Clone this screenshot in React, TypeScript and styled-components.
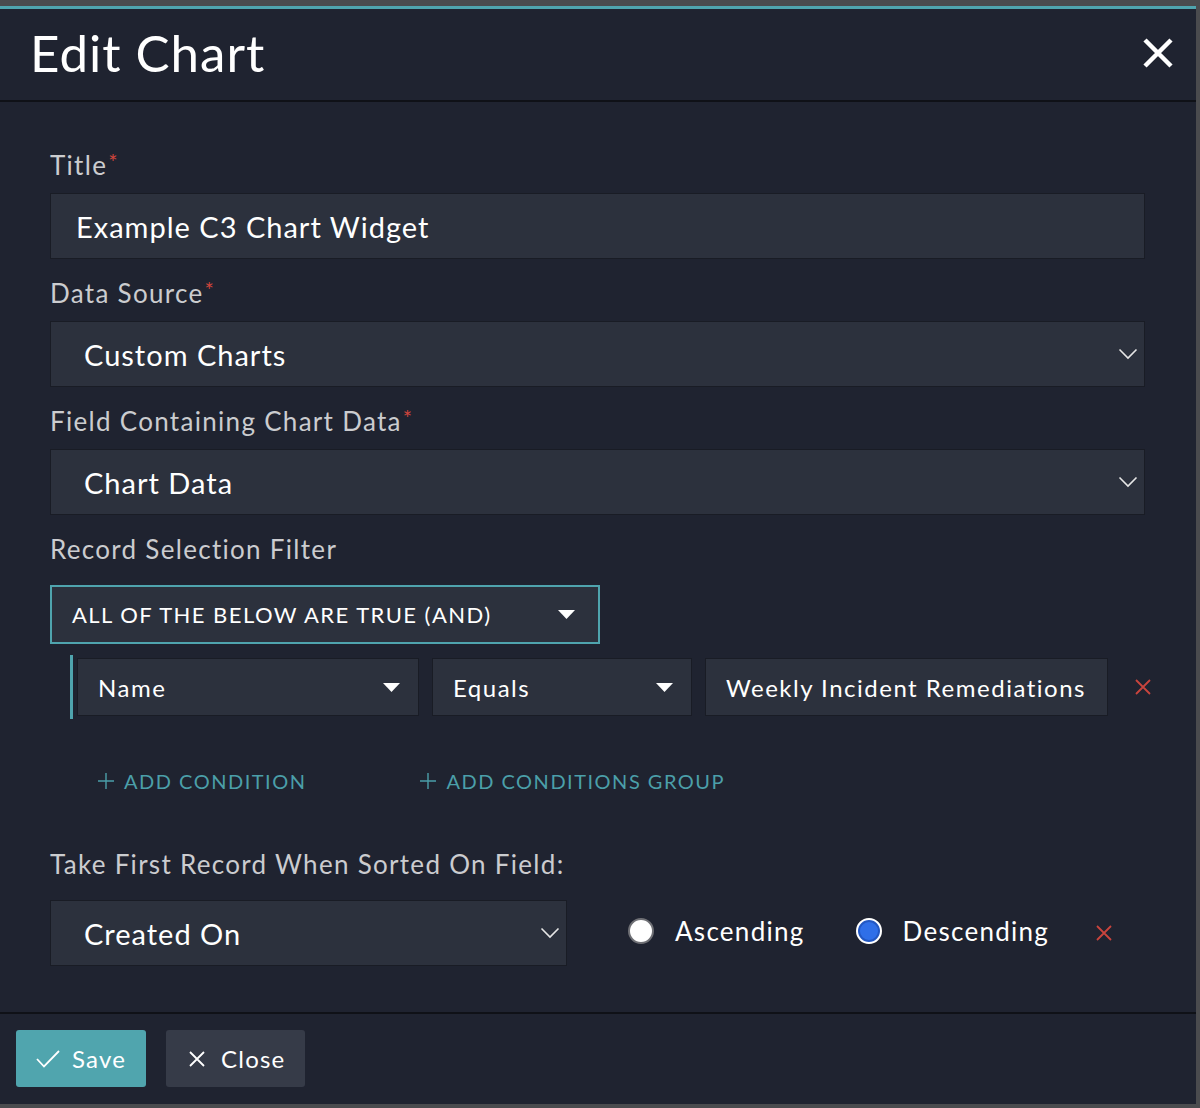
import React from 'react';
import styled, { createGlobalStyle } from 'styled-components';

const GlobalStyle = createGlobalStyle`
  * { box-sizing: border-box; }
  html, body { margin: 0; padding: 0; }
  body {
    background: #4a4b4e;
    font-family: Lato, "Open Sans", sans-serif;
    color: #fff;
  }
`;

const Chevron = () => (
  <svg width="20" height="12" viewBox="0 0 20 12" fill="none">
    <path d="M1.5 1.5 L10 10 L18.5 1.5" stroke="#e6e6e6" strokeWidth="1.6" />
  </svg>
);

const Caret = () => (
  <svg width="17" height="9" viewBox="0 0 17 9">
    <path d="M0 0 H17 L8.5 9 Z" fill="#fff" />
  </svg>
);

const RemoveX = () => (
  <svg width="16" height="16" viewBox="0 0 16 16">
    <path d="M1 1 L15 15 M15 1 L1 15" stroke="#c9443d" strokeWidth="1.8" />
  </svg>
);

const Plus = () => (
  <svg width="18" height="18" viewBox="0 0 18 18">
    <path d="M9 1 V17 M1 9 H17" stroke="#4b9fa9" strokeWidth="1.4" />
  </svg>
);

const App: React.FC = () => {
  return (
    <>
      <GlobalStyle />
      <Modal>
        <Header>
          <HeaderTitle>Edit Chart</HeaderTitle>
          <CloseIcon aria-label="close">
            <svg width="32" height="32" viewBox="0 0 32 32">
              <path d="M3 3 L29 29 M29 3 L3 29" stroke="#fff" strokeWidth="4.5" />
            </svg>
          </CloseIcon>
        </Header>
        <Body>
          <Label>
            Title<Req>*</Req>
          </Label>
          <Field>Example C3 Chart Widget</Field>

          <Label>
            Data Source<Req>*</Req>
          </Label>
          <Field $select>
            Custom Charts
            <Chevron />
          </Field>

          <Label>
            Field Containing Chart Data<Req>*</Req>
          </Label>
          <Field $select>
            Chart Data
            <Chevron />
          </Field>

          <Label>Record Selection Filter</Label>
          <LogicSelect>
            ALL OF THE BELOW ARE TRUE (AND)
            <Caret />
          </LogicSelect>

          <ConditionRow>
            <CondBox $width={342} $caret>
              Name
              <Caret />
            </CondBox>
            <CondBox $width={260} $caret>
              Equals
              <Caret />
            </CondBox>
            <CondBox $width={403}>Weekly Incident Remediations</CondBox>
            <RemoveSlot>
              <RemoveX />
            </RemoveSlot>
          </ConditionRow>

          <AddRow>
            <AddLink>
              <Plus />
              ADD CONDITION
            </AddLink>
            <AddLink>
              <Plus />
              ADD CONDITIONS GROUP
            </AddLink>
          </AddRow>

          <Label>Take First Record When Sorted On Field:</Label>
          <SortRow>
            <Field $select $width={517}>
              Created On
              <Chevron />
            </Field>
            <RadioOption>
              <Radio />
              Ascending
            </RadioOption>
            <RadioOption>
              <Radio $checked />
              Descending
            </RadioOption>
            <RemoveX />
          </SortRow>
        </Body>
        <Footer>
          <Button $primary>
            <svg width="24" height="20" viewBox="0 0 24 20" fill="none">
              <path d="M1 10 L8 17.5 L23 2" stroke="#fff" strokeWidth="1.8" />
            </svg>
            Save
          </Button>
          <Button>
            <svg width="16" height="16" viewBox="0 0 16 16" fill="none">
              <path d="M1 1 L15 15 M15 1 L1 15" stroke="#fff" strokeWidth="1.8" />
            </svg>
            Close
          </Button>
        </Footer>
      </Modal>
    </>
  );
};

const Modal = styled.div`
  width: 1196px;
  height: 1098px;
  margin-top: 6px;
  background: #1f2330;
  border-top: 3px solid #4fa4ae;
  display: flex;
  flex-direction: column;
`;

const Header = styled.div`
  height: 93px;
  border-bottom: 2px solid #0f1117;
  display: flex;
  align-items: center;
  justify-content: space-between;
  padding: 0 22px 0 30px;
`;

const HeaderTitle = styled.h1`
  margin: 0;
  font-size: 51px;
  font-weight: 400;
  line-height: 1;
  letter-spacing: 1px;
  padding-bottom: 4px;
`;

const CloseIcon = styled.div`
  display: flex;
  padding-bottom: 4px;
`;

const Body = styled.div`
  flex: 1;
  padding: 49px 51px 0 50px;
  display: flex;
  flex-direction: column;
`;

const Label = styled.div`
  font-size: 26px;
  line-height: 28px;
  color: #cbcccf;
  letter-spacing: 1.3px;
  margin-bottom: 14px;
`;

const Req = styled.span`
  color: #d0453c;
  font-size: 22px;
  vertical-align: top;
  line-height: 22px;
  margin-left: 1px;
`;

const Field = styled.div<{ $select?: boolean; $width?: number }>`
  height: 66px;
  width: ${(p) => (p.$width ? `${p.$width}px` : '100%')};
  flex-shrink: 0;
  background: #2c313d;
  border: 1px solid #191c25;
  display: flex;
  align-items: center;
  justify-content: space-between;
  padding: 0 6px 0 ${(p) => (p.$select ? '33px' : '25px')};
  font-size: 29px;
  letter-spacing: 1px;
  color: #fff;
  margin-bottom: 20px;
`;

const LogicSelect = styled.div`
  width: 550px;
  height: 59px;
  margin-top: 8px;
  border: 2px solid #4fa4ae;
  background: #2c313d;
  display: flex;
  align-items: center;
  justify-content: space-between;
  padding: 0 23px 0 20px;
  font-size: 22px;
  letter-spacing: 1.45px;
`;

const ConditionRow = styled.div`
  margin: 11px 0 0 20px;
  border-left: 3px solid #4fa4ae;
  padding: 3px 0 3px 4px;
  display: flex;
  align-items: center;
  gap: 13px;
`;

const CondBox = styled.div<{ $width: number; $caret?: boolean }>`
  width: ${(p) => p.$width}px;
  flex-shrink: 0;
  height: 58px;
  background: #2c313d;
  border: 1px solid #191c25;
  display: flex;
  align-items: center;
  justify-content: space-between;
  padding: 0 ${(p) => (p.$caret ? '18px' : '10px')} 0 20px;
  font-size: 24px;
  letter-spacing: 1.5px;
`;

const RemoveSlot = styled.div`
  display: flex;
  flex-shrink: 0;
  margin-left: 14px;
`;

const AddRow = styled.div`
  display: flex;
  gap: 113px;
  padding-left: 47px;
  margin-top: 50px;
  margin-bottom: 57px;
`;

const AddLink = styled.div`
  display: flex;
  align-items: center;
  gap: 9px;
  color: #4b9fa9;
  font-size: 20px;
  letter-spacing: 1.5px;
  line-height: 24px;
`;

const SortRow = styled.div`
  display: flex;
  align-items: center;
  margin-top: 8px;

  & > ${Field} {
    margin-bottom: 0;
    margin-right: 61px;
  }
`;

const RadioOption = styled.label`
  display: flex;
  align-items: center;
  gap: 21px;
  font-size: 26px;
  letter-spacing: 1.27px;
  margin-right: 51px;
  padding-bottom: 4px;

  &:last-of-type {
    margin-right: 47px;
  }
`;

const Radio = styled.span<{ $checked?: boolean }>`
  width: 26px;
  height: 26px;
  border-radius: 50%;
  flex-shrink: 0;
  background: ${(p) => (p.$checked ? '#2f6fe8' : '#fff')};
  border: 2px solid ${(p) => (p.$checked ? '#fff' : '#6f7075')};
  box-shadow: ${(p) => (p.$checked ? 'inset 0 0 0 2px #2358c2' : 'none')};
`;

const Footer = styled.div`
  border-top: 2px solid #0f1117;
  padding: 16px 16px 17px;
  display: flex;
  gap: 20px;
`;

const Button = styled.button<{ $primary?: boolean }>`
  height: 57px;
  border: none;
  border-radius: 3px;
  background: ${(p) => (p.$primary ? '#50a5ae' : '#363b48')};
  color: #fff;
  font-family: inherit;
  font-size: 24px;
  letter-spacing: 1.2px;
  display: flex;
  align-items: center;
  gap: ${(p) => (p.$primary ? '12px' : '16px')};
  padding: ${(p) => (p.$primary ? '0 20px 0 20px' : '0 20px 0 23px')};
`;

export default App;
